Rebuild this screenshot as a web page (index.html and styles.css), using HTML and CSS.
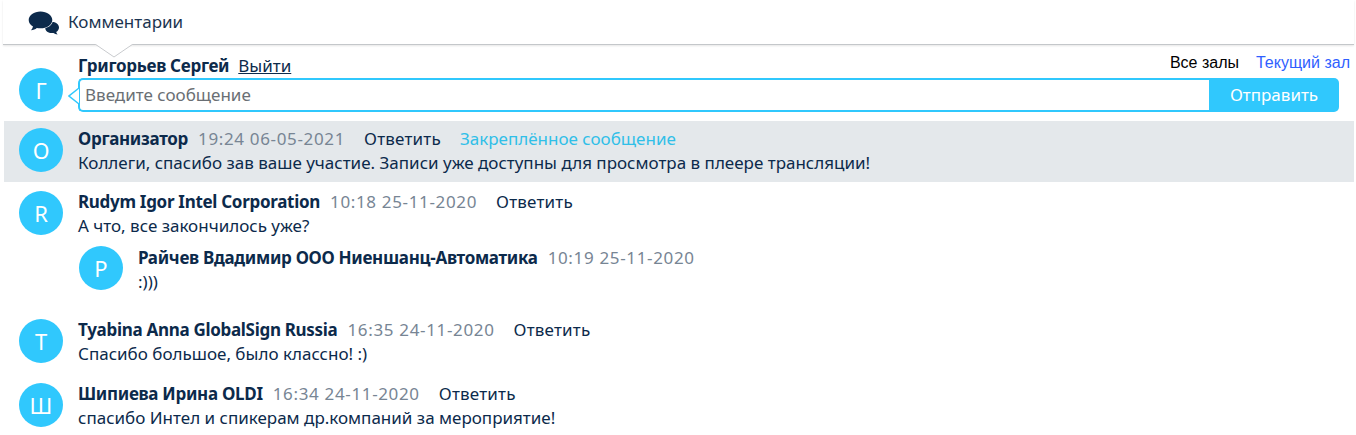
FILE: index.html
```html
<!DOCTYPE html>
<html lang="ru">
<head>
<meta charset="utf-8">
<title>Комментарии</title>
<link rel="stylesheet" href="styles.css">
</head>
<body>
<div class="page">
  <header class="head">
    <svg class="head-icon" width="32" height="24" viewBox="0 0 32 24"><path class="ic" d="M24.500 11c3.700 0 6.500 2.500 6.500 5.500 0 1.900-1.100 3.500-2.800 4.500.2.900.7 1.700 1.400 2.400-1.600-.1-3-.7-4.100-1.500-.6.100-1.200.2-1.800.2-3.300 0-6.500-2-6.500-5 0-3.400 3.500-6.100 8.800-6.100z"/><path class="ic ic-front" d="M12.500.5C6 .5.7 4.300.7 9c0 2.700 1.700 5 4.300 6.500-.3 1.500-1 2.800-2 3.800 2.300-.2 4.300-1.100 5.800-2.400 1.200.3 2.400.4 3.700.4 6.500 0 11.800-3.600 11.800-8.300S19 .5 12.500.5z"/></svg>
    <span class="head-title">Комментарии</span>
    <svg class="notch" width="40" height="16" viewBox="0 0 40 16"><path class="notch-fill" d="M0 0L19 13L38 0Z"/><path class="notch-line" d="M0 0L19 13L38 0"/></svg>
  </header>
  <section class="compose">
    <div class="avatar compose-avatar">Г</div>
    <div class="compose-main">
      <div class="compose-top">
        <div class="compose-user"><b class="name">Григорьев Сергей</b><a class="logout">Выйти</a></div>
        <div class="tabs"><span class="tab">Все залы</span><span class="tab tab-on">Текущий зал</span></div>
      </div>
      <div class="compose-box">
        <svg class="box-tip" width="12" height="18" viewBox="0 0 12 18"><path class="tip-fill" d="M11 1L1 9L11 17Z"/><path class="tip-line" d="M11 1L1 9L11 17"/></svg>
        <div class="field">Введите сообщение</div>
        <div class="send">Отправить</div>
      </div>
    </div>
  </section>
  <article class="msg msg-pin">
    <div class="avatar">О</div>
    <div class="body">
      <div class="meta"><b class="name">Организатор</b><span class="time">19:24 06-05-2021</span><span class="reply">Ответить</span><span class="pin">Закреплённое сообщение</span></div>
      <div class="text">Коллеги, спасибо зав ваше участие. Записи уже доступны для просмотра в плеере трансляции!</div>
    </div>
  </article>
  <article class="msg msg-r">
    <div class="avatar">R</div>
    <div class="body">
      <div class="meta"><b class="name">Rudym Igor Intel Corporation</b><span class="time">10:18 25-11-2020</span><span class="reply">Ответить</span></div>
      <div class="text">А что, все закончилось уже?</div>
      <div class="sub">
        <div class="avatar">Р</div>
        <div class="body">
          <div class="meta"><b class="name">Райчев Вдадимир ООО Ниеншанц-Автоматика</b><span class="time">10:19 25-11-2020</span></div>
          <div class="text">:)))</div>
        </div>
      </div>
    </div>
  </article>
  <article class="msg msg-t">
    <div class="avatar">Т</div>
    <div class="body">
      <div class="meta"><b class="name">Tyabina Anna GlobalSign Russia</b><span class="time">16:35 24-11-2020</span><span class="reply">Ответить</span></div>
      <div class="text">Спасибо большое, было классно! :)</div>
    </div>
  </article>
  <article class="msg msg-sh">
    <div class="avatar">Ш</div>
    <div class="body">
      <div class="meta"><b class="name">Шипиева Ирина OLDI</b><span class="time">16:34 24-11-2020</span><span class="reply">Ответить</span></div>
      <div class="text">спасибо Интел и спикерам др.компаний за мероприятие!</div>
    </div>
  </article>
</div>
</body>
</html>
```
FILE: styles.css
```css
* { box-sizing: border-box; }
html, body { margin: 0; padding: 0; background: #fff; height: 435px; overflow: hidden; }
body { font-family: "Noto Sans", "Open Sans", sans-serif; font-size: 17px; color: #0c2a4b; }
.page { padding: 0 2px 0 4px; width: 1356px; }
.head { position: relative; height: 45px; margin: 0 0 0 -1px; display: flex; align-items: center; gap: 8px; padding: 0 0 2px 25px; border-bottom: 1px solid #c4c7ca; box-shadow: 0 1px 2px rgba(0,0,0,.1); }
.head-icon { flex: none; margin-top: 3px; }
.ic { fill: #0c2a4b; }
.ic-front { stroke: #fff; stroke-width: 1.200; paint-order: stroke; }
.head-title { font-size: 17px; color: #1b3450; }
.notch { position: absolute; left: 92px; top: 44px; }
.notch-fill { fill: #fff; }
.notch-line { fill: none; stroke: #c9cbce; stroke-width: 1; }
.compose { display: flex; padding: 0 0 0 15px; height: 76px; align-items: flex-end; }
.compose-avatar { margin-bottom: 9px; }
.compose-main { margin-left: 15px; width: 1261px; padding-bottom: 9px; }
.compose-top { display: flex; justify-content: space-between; align-items: flex-end; height: 34px; }
.compose-user { line-height: 24px; }
.logout { margin-left: 9px; text-decoration: underline; color: #0c2a4b; }
.tabs { font-family: "Liberation Sans", Arial, sans-serif; font-size: 16px; display: flex; gap: 17px; padding-bottom: 6px; line-height: 18px; margin-right: -11px; }
.tab { color: #000; }
.tab-on { color: #2f5fff; }
.compose-box { display: flex; height: 34px; position: relative; width: 1261px; }
.box-tip { position: absolute; left: -10px; top: 9px; }
.tip-fill { fill: #fff; }
.tip-line { fill: none; stroke: #30c8fd; stroke-width: 1.500; }
.field { flex: 1; border: 2px solid #30c8fd; border-right: 0; border-radius: 5px 0 0 5px; padding: 0 5px; line-height: 30px; color: #6a6f74; background: #fff; }
.send { width: 130px; flex: none; background: #30c8fd; color: #fff; text-align: center; line-height: 34px; border-radius: 0 5px 5px 0; }
.msg { display: flex; padding: 0 0 0 15px; gap: 15px; }
.avatar { width: 44px; height: 44px; border-radius: 50%; background: #30c8fd; color: #fff; font-size: 22px; line-height: 44px; text-align: center; flex: none; }
.msg-pin { background: #e4e8eb; height: 61px; padding-top: 7px; width: 1350px; }
.msg-r { padding-top: 9px; height: 128px; }
.msg-t { padding-top: 9px; height: 64px; }
.msg-sh { padding-top: 9px; }
.body { margin-top: -1px; }
.meta { display: flex; height: 24px; line-height: 24px; align-items: baseline; }
.text { line-height: 24px; white-space: nowrap; }
.name { font-weight: 700; white-space: nowrap; letter-spacing: -0.3px; }
.time { color: #778594; margin-left: 10px; white-space: nowrap; letter-spacing: .65px; }
.reply { margin-left: 19px; white-space: nowrap; letter-spacing: .2px; }
.pin { color: #30bfe8; margin-left: 19px; white-space: nowrap; }
.sub { display: flex; gap: 15px; margin-top: 8px; margin-left: 1px; }
.sub .body { margin-top: 0; }
```
